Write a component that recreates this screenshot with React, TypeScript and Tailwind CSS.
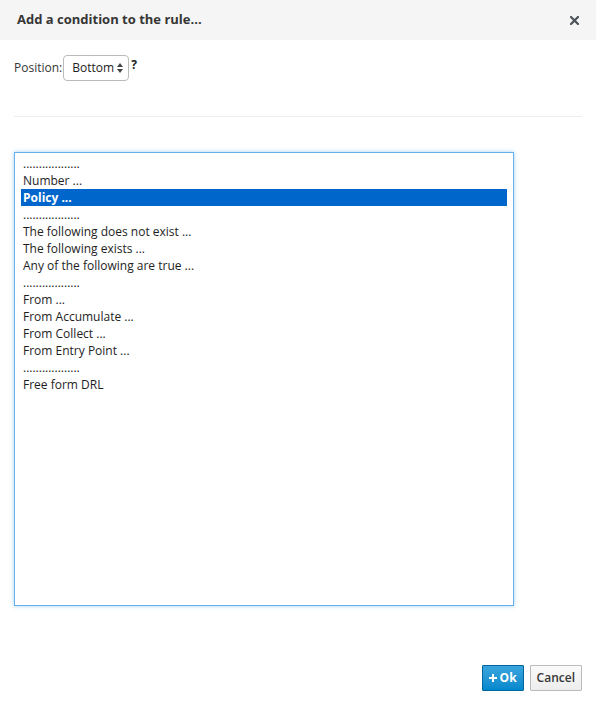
const items = [
  '..................',
  'Number ...',
  'Policy ...',
  '..................',
  'The following does not exist ...',
  'The following exists ...',
  'Any of the following are true ...',
  '..................',
  'From ...',
  'From Accumulate ...',
  'From Collect ...',
  'From Entry Point ...',
  '..................',
  'Free form DRL',
]

export default function App() {
  const selected = 2

  return (
    <div className="w-[596px] h-[704px] bg-white flex flex-col text-[12px] text-[#363636]" style={{ fontFamily: '"Open Sans", "Liberation Sans", sans-serif' }}>
      {/* header */}
      <div className="h-[40px] bg-[#f5f5f5] flex items-center justify-between pl-[17px] pr-[17px] shrink-0">
        <h4 className="text-[13px] font-bold text-[#363636]">Add a condition to the rule...</h4>
        <svg width="9" height="9" viewBox="0 0 9 9" className="mt-[1px]">
          <path d="M1 1 L8 8 M8 1 L1 8" stroke="#4d5258" strokeWidth="2.2" strokeLinecap="square" />
        </svg>
      </div>

      {/* body */}
      <div className="flex flex-col px-[14px] pt-[15px] grow">
        <div className="flex items-center h-[26px]">
          <span className="mr-[1px]">Position:</span>
          <div className="h-[26px] w-[66px] border border-[#bbbbbb] rounded-[4px] flex items-center pl-[8px] pr-[5px] justify-between bg-white">
            <span className="text-[12px] text-[#222]">Bottom</span>
            <svg width="6" height="10" viewBox="0 0 6 10">
              <path d="M0 4 L3 0 L6 4 Z M0 6 L3 10 L6 6 Z" fill="#444" />
            </svg>
          </div>
          <span className="font-bold ml-[2px] -mt-[6px] text-[#222]">?</span>
        </div>

        <div className="mt-[35px] border-t border-[#ededed]" />

        <div className="mt-[35px] w-[500px] h-[454px] border border-[#66afe9] shadow-[0_0_4px_rgba(102,175,233,0.6)] pt-[2px] px-[6px]">
          {items.map((item, i) => (
            <div
              key={i}
              className={
                i === selected
                  ? 'h-[17px] leading-[17px] px-[2px] bg-[#0066cc] text-white font-bold'
                  : 'h-[17px] leading-[17px] px-[2px] text-[#1e1e1e]'
              }
            >
              {item}
            </div>
          ))}
        </div>
      </div>

      {/* footer */}
      <div className="flex justify-end gap-[6px] px-[14px] pb-[13px]">
        <button className="h-[26px] px-[6px] rounded-[1px] border border-[#00659c] bg-gradient-to-b from-[#39a5dc] to-[#0088ce] text-white font-bold text-[12px] flex items-center gap-[3px]">
          <svg width="8" height="8" viewBox="0 0 8 8">
            <path d="M4 0 V8 M0 4 H8" stroke="white" strokeWidth="2" />
          </svg>
          Ok
        </button>
        <button className="h-[26px] px-[6px] rounded-[1px] border border-[#bbbbbb] bg-gradient-to-b from-[#fafafa] to-[#ededed] text-[#363636] font-semibold text-[12px]">
          Cancel
        </button>
      </div>
    </div>
  )
}
